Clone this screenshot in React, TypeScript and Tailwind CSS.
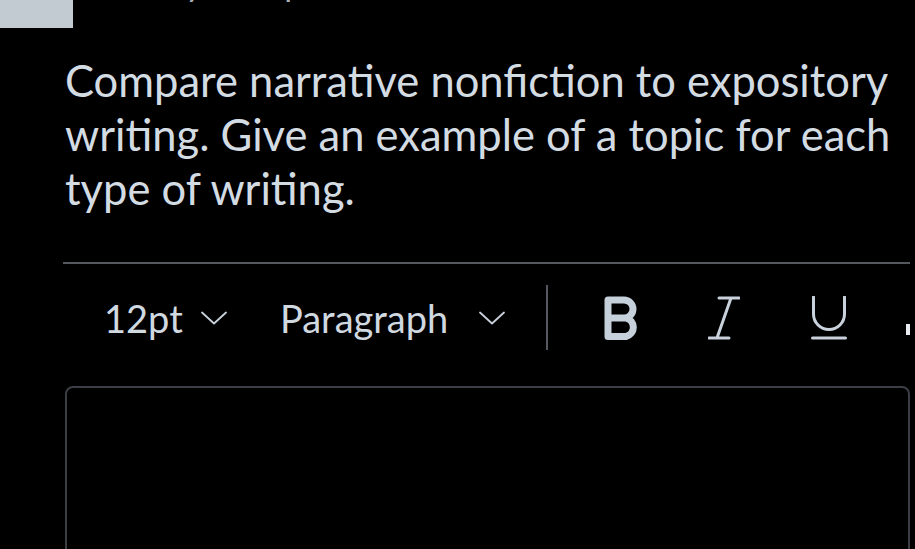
import React from "react";

const Chevron = () => (
  <svg width="26" height="14" viewBox="0 0 26 14" fill="none" className="shrink-0">
    <path d="M1 1.5 L13 12.5 L25 1.5" stroke="#c9d2dc" strokeWidth="1.8" strokeLinecap="round" strokeLinejoin="round" />
  </svg>
);

const BoldIcon = () => (
  <svg width="36" height="44" viewBox="0 0 36 44" fill="none" className="shrink-0">
    <path
      d="M4 4 H20 A9 9 0 0 1 20 22 H4 Z M4 22 H22 A9.5 9.5 0 0 1 22 40.5 H4 Z"
      stroke="#c5d0da"
      strokeWidth="7"
      strokeLinejoin="round"
    />
  </svg>
);

const ItalicIcon = () => (
  <svg width="32" height="44" viewBox="0 0 32 44" fill="none" className="shrink-0">
    <path d="M11 2 H31 M1 42 H21 M23 2 L9 42" stroke="#c9d2dc" strokeWidth="3" strokeLinecap="round" />
  </svg>
);

const UnderlineIcon = () => (
  <svg width="36" height="44" viewBox="0 0 36 44" fill="none" className="shrink-0">
    <path d="M2.5 1 V18 A15.5 15.5 0 0 0 33.5 18 V1 M1.5 42 H34.5" stroke="#c9d2dc" strokeWidth="3" strokeLinecap="round" />
  </svg>
);

export default function App() {
  return (
    <div
      className="w-[915px] h-[549px] overflow-hidden bg-black"
      style={{ fontFamily: "Lato, 'Noto Sans', sans-serif" }}
    >
      <div className="-mt-[34px] flex flex-col">
        {/* top row (scrolled partly out of view) */}
        <div className="flex items-end h-[62px]">
          <div className="w-[73px] h-[62px] bg-[#c2cad2] shrink-0" />
          <div className="flex items-end ml-[47px] text-[34px] leading-[40px] text-[#a9b1b9] mb-[25px]">
            <span>Essay</span>
            <span className="ml-[53px]">5 points</span>
          </div>
        </div>

        {/* question */}
        <div className="ml-[65px] mt-[25px] w-[840px] text-[43.5px] leading-[54px] text-[#d3dbe3]">
          Compare narrative nonfiction to expository writing. Give an example of a topic for each type of writing.
        </div>

        {/* separator */}
        <div className="ml-[63px] mt-[47px] w-[847px] h-[2px] bg-[#55595f]" />

        {/* toolbar */}
        <div className="mt-[21px] h-[65px] flex items-center text-[38px] leading-[46px] text-[#d0d8e0]">
          <span className="ml-[104px] w-[97px]">12pt</span>
          <Chevron />
          <span className="ml-[53px] w-[199px]">Paragraph</span>
          <Chevron />
          <div className="ml-[41px] w-[2px] h-[65px] bg-[#55595f]" />
          <div className="ml-[56px]">
            <BoldIcon />
          </div>
          <div className="ml-[68px]">
            <ItalicIcon />
          </div>
          <div className="ml-[71px]">
            <UnderlineIcon />
          </div>
          <div className="ml-[59px] mt-[24px] w-[4px] h-[11px] bg-[#e8ecf0]" />
        </div>

        {/* answer box */}
        <div className="ml-[65px] mt-[36px] w-[845px] h-[260px] rounded-[8px] border-2 border-[#3b3f45] bg-black" />
      </div>
    </div>
  );
}
